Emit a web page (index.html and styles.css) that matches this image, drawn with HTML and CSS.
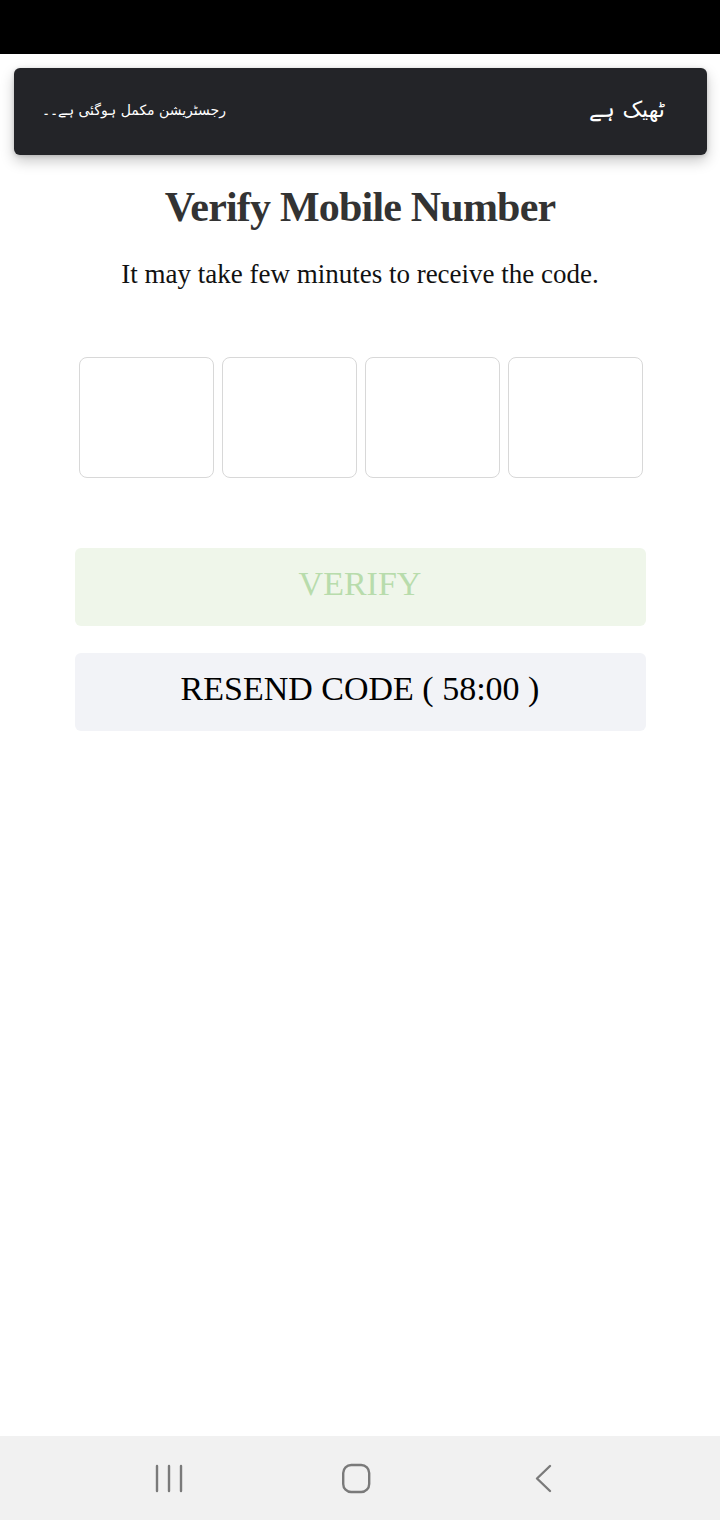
FILE: index.html
```html
<!DOCTYPE html>
<html>
<head>
<meta charset="utf-8">
<link rel="stylesheet" href="styles.css">
</head>
<body>
<div class="screen">
  <div class="statusbar"></div>
  <div class="toast-wrap">
    <div class="toast">
      <span class="toast-msg" dir="rtl">رجسٹریشن مکمل ہوگئی ہے۔۔</span>
      <span class="toast-action" dir="rtl">ٹھیک ہے</span>
    </div>
  </div>
  <main class="content">
    <h1 class="title">Verify Mobile Number</h1>
    <p class="subtitle">It may take few minutes to receive the code.</p>
    <div class="otp">
      <div class="otp-box"></div>
      <div class="otp-box"></div>
      <div class="otp-box"></div>
      <div class="otp-box"></div>
    </div>
    <div class="btn btn-verify">VERIFY</div>
    <div class="btn btn-resend">RESEND CODE ( 58:00 )</div>
  </main>
  <nav class="navbar">
    <svg class="nav-icon" width="30" height="32" viewBox="0 0 30 32"><g stroke="#7a7a7a" stroke-width="2.4" stroke-linecap="round"><line x1="3" y1="4" x2="3" y2="29"/><line x1="15" y1="4" x2="15" y2="29"/><line x1="27" y1="4" x2="27" y2="29"/></g></svg>
    <svg class="nav-icon" width="30" height="32" viewBox="0 0 30 32"><rect x="2.2" y="3" width="26" height="27" rx="8" fill="none" stroke="#7a7a7a" stroke-width="2.4"/></svg>
    <svg class="nav-icon" width="30" height="32" viewBox="0 0 30 32"><polyline points="22,4 9,16.5 22,29" fill="none" stroke="#7a7a7a" stroke-width="2.4" stroke-linecap="round" stroke-linejoin="round"/></svg>
  </nav>
</div>
</body>
</html>
```
FILE: styles.css
```css
html, body {
  margin: 0;
  padding: 0;
  background: #ffffff;
}
.screen {
  width: 720px;
  height: 1520px;
  display: flex;
  flex-direction: column;
  overflow: hidden;
}
.statusbar {
  height: 54px;
  background: #000000;
  flex: none;
}
.toast-wrap {
  padding: 14px 13px 0 14px;
}
.toast {
  box-sizing: border-box;
  height: 87px;
  background: #232428;
  border-radius: 6px;
  box-shadow: 0 6px 14px rgba(0,0,0,0.22), 0 1px 4px rgba(0,0,0,0.15);
  display: flex;
  align-items: center;
  justify-content: space-between;
  padding: 0 42px 4px 28px;
  color: #ffffff;
  font-family: "DejaVu Sans", sans-serif;
}
.toast-msg {
  font-size: 14px;
}
.toast-action {
  font-size: 22px;
}
.content {
  flex: 1;
  display: flex;
  flex-direction: column;
  align-items: center;
  font-family: "Liberation Serif", "Times New Roman", serif;
}
.title {
  margin: 27px 0 0 0;
  font-size: 42px;
  font-weight: bold;
  color: #333333;
  letter-spacing: -0.8px;
  line-height: 50px;
}
.subtitle {
  margin: 24px 0 0 0;
  font-size: 27px;
  color: #111111;
  line-height: 36px;
}
.otp {
  margin-top: 65px;
  padding-left: 1px;
  display: flex;
  gap: 8px;
}
.otp-box {
  width: 133px;
  height: 119px;
  border: 1px solid #d8d8d8;
  border-radius: 8px;
}
.btn {
  box-sizing: border-box;
  width: 571px;
  height: 78px;
  padding-bottom: 6px;
  border-radius: 6px;
  display: flex;
  align-items: center;
  justify-content: center;
  font-size: 34px;
}
.btn-verify {
  margin-top: 70px;
  background: #eff6ea;
  color: #b8dcac;
}
.btn-resend {
  margin-top: 27px;
  background: #f2f3f7;
  color: #000000;
}
.navbar {
  height: 84px;
  background: #f1f1f1;
  flex: none;
  display: flex;
  align-items: center;
  justify-content: center;
  gap: 157px;
  padding-right: 8px;
}
.nav-icon {
  display: block;
}
```
